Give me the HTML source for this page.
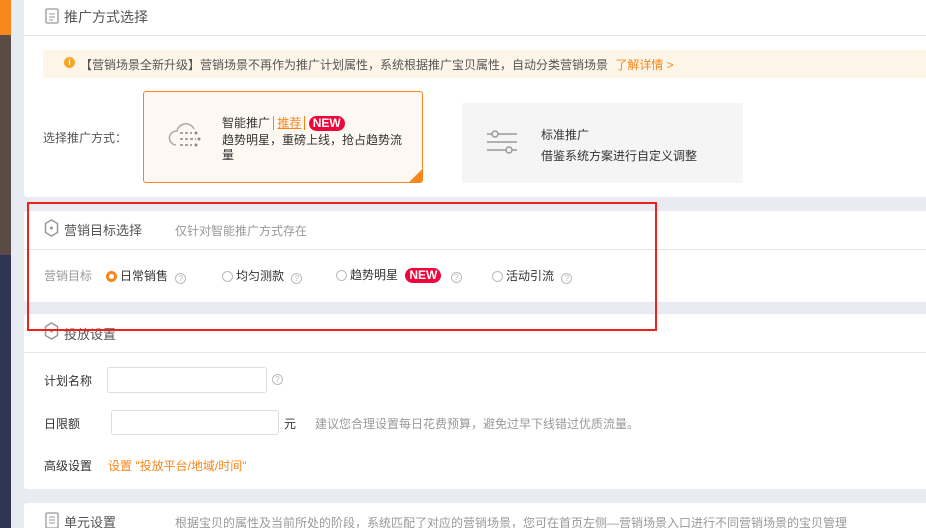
<!DOCTYPE html><html><head><meta charset="utf-8"><style>
*{margin:0;padding:0;box-sizing:border-box}
html,body{width:926px;height:528px;overflow:hidden}
body{background:#e8ebf2;font-family:"Liberation Sans","Noto Sans CJK SC",sans-serif;font-size:12px;color:#333;position:relative}
.a{position:absolute}
.card{position:absolute;left:24px;width:910px;background:#fff;border-radius:3px;overflow:hidden}
.hr{position:absolute;left:0;right:0;height:1px;background:#e6e6e6}
.q{display:inline-block;width:11px;height:11px;border:1px solid #bbb;border-radius:50%;color:#bbb;font-size:8px;line-height:9px;text-align:center;vertical-align:-1px}
.rad{display:inline-block;width:11px;height:11px;border:1px solid #bbb;border-radius:50%;vertical-align:-2px;margin-right:3px}
.new{display:inline-block;background:#f0063b;color:#fff;border-radius:8px;padding:0 4px;font-size:12px;line-height:15px;font-weight:bold}
.inp{position:absolute;border:1px solid #ddd;border-radius:3px;background:#fff}
</style></head><body>
<div class="a" style="left:0;top:0;width:11px;height:35px;background:#f7861d"></div>
<div class="a" style="left:0;top:35px;width:11px;height:220px;background:#5a4b46"></div>
<div class="a" style="left:0;top:255px;width:11px;height:273px;background:#2f3654"></div>

<div class="card" style="top:-4px;height:201px">
 <svg class="a" style="left:21px;top:12px" width="14" height="16"><rect x="1" y="1" width="12" height="14" rx="1" fill="none" stroke="#999" stroke-width="1.3"/><path d="M4 6h6M4 9h6M4 12h4" stroke="#999"/></svg>
 <div class="a" style="left:40px;top:11px;font-size:14px;color:#555">推广方式选择</div>
 <div class="hr" style="top:39px"></div>
 <div class="a" style="left:19px;top:54px;width:900px;height:28px;background:#fdf6e8"></div>
 <div class="a" style="left:40px;top:61px;width:11px;height:11px;border-radius:50%;background:#f5a623;color:#fff;font-size:9px;line-height:11px;text-align:center;font-weight:bold">i</div>
 <div class="a" style="left:56px;top:60px;color:#555">【营销场景全新升级】营销场景不再作为推广计划属性，系统根据推广宝贝属性，自动分类营销场景 <span style="color:#f7861d;margin-left:4px">了解详情 &gt;</span></div>
 <div class="a" style="left:19px;top:133px;color:#555">选择推广方式：</div>
 <div class="a" style="left:119px;top:95px;width:280px;height:92px;border:1px solid #f7861d;border-radius:3px;background:#fdf8f2;overflow:hidden">
  <svg class="a" style="left:22px;top:27px" width="40" height="32"><path d="M10 26a7 7 0 0 1 1-14a9 9 0 0 1 17-2" fill="none" stroke="#aaa" stroke-width="1.5"/><path d="M14 14h12M14 20h16M14 26h12" stroke="#888" stroke-width="1.5" stroke-dasharray="3 2"/><circle cx="30" cy="14" r="1.5" fill="#888"/><circle cx="33" cy="20" r="1.5" fill="#888"/><circle cx="30" cy="26" r="1.5" fill="#888"/></svg>
  <div class="a" style="left:78px;top:22px;font-size:12px;color:#333">智能推广 <span style="border-left:1px solid #f7861d;border-right:1px solid #f7861d;color:#f7861d;padding:0 3px;text-decoration:underline">推荐</span> <span class="new">NEW</span></div>
  <div class="a" style="left:78px;top:41px;width:185px;line-height:15px;color:#333">趋势明星，重磅上线，抢占趋势流量</div>
  <div class="a" style="right:-9px;bottom:-9px;width:18px;height:18px;background:#f7861d;transform:rotate(45deg)"></div>
 </div>
 <div class="a" style="left:438px;top:107px;width:281px;height:80px;background:#f5f5f5;border-radius:2px">
  <svg class="a" style="left:23px;top:26px" width="34" height="26"><path d="M2 5h30M2 13h30M2 21h30" stroke="#999" stroke-width="1.5"/><circle cx="10" cy="5" r="3" fill="#f5f5f5" stroke="#999" stroke-width="1.5"/><circle cx="24" cy="21" r="3" fill="#f5f5f5" stroke="#999" stroke-width="1.5"/></svg>
  <div class="a" style="left:79px;top:23px">标准推广</div>
  <div class="a" style="left:79px;top:44px">借鉴系统方案进行自定义调整</div>
 </div>
</div>

<div class="card" style="top:211px;height:91px">
 <svg class="a" style="left:20px;top:8px" width="15" height="18"><path d="M7.5 1l6 3.5v9l-6 3.5l-6-3.5v-9z" fill="none" stroke="#999" stroke-width="1.5"/><circle cx="7.5" cy="9" r="1.5" fill="#999"/></svg>
 <div class="a" style="left:40px;top:9px;font-size:13px;color:#555">营销目标选择</div>
 <div class="a" style="left:151px;top:11px;color:#999">仅针对智能推广方式存在</div>
 <div class="hr" style="top:38px"></div>
 <div class="a" style="left:20px;top:56px;color:#999">营销目标</div>
 <div class="a" style="left:82px;top:56px"><span class="rad" style="border:3px solid #f7861d;background:#fff"></span>日常销售 <span class="q" style="margin-left:4px">?</span></div>
 <div class="a" style="left:198px;top:56px"><span class="rad"></span>均匀测款 <span class="q" style="margin-left:4px">?</span></div>
 <div class="a" style="left:312px;top:55px"><span class="rad"></span>趋势明星 <span class="new" style="margin-left:4px">NEW</span> <span class="q" style="margin-left:6px">?</span></div>
 <div class="a" style="left:468px;top:56px"><span class="rad"></span>活动引流 <span class="q" style="margin-left:4px">?</span></div>
</div>

<div class="card" style="top:314px;height:175px">
 <svg class="a" style="left:20px;top:8px" width="15" height="18"><path d="M7.5 1l6 3.5v9l-6 3.5l-6-3.5v-9z" fill="none" stroke="#999" stroke-width="1.5"/><circle cx="7.5" cy="9" r="1.5" fill="#999"/></svg>
 <div class="a" style="left:40px;top:10px;font-size:13px;color:#555">投放设置</div>
 <div class="hr" style="top:38px"></div>
 <div class="a" style="left:20px;top:58px">计划名称</div>
 <div class="inp" style="left:83px;top:53px;width:160px;height:26px"></div>
 <span class="a q" style="left:248px;top:60px">?</span>
 <div class="a" style="left:20px;top:101px">日限额</div>
 <div class="inp" style="left:87px;top:96px;width:168px;height:25px"></div>
 <div class="a" style="left:260px;top:101px">元</div>
 <div class="a" style="left:291px;top:101px;color:#999">建议您合理设置每日花费预算，避免过早下线错过优质流量。</div>
 <div class="a" style="left:20px;top:143px">高级设置</div>
 <div class="a" style="left:84px;top:143px;color:#f7861d">设置 "投放平台/地域/时间"</div>
</div>

<div class="card" style="top:503px;height:40px">
 <svg class="a" style="left:21px;top:9px" width="14" height="17"><rect x="1" y="1" width="12" height="15" rx="1" fill="none" stroke="#999" stroke-width="1.3"/><path d="M4 5h6M4 8h6M4 11h6" stroke="#999"/></svg>
 <div class="a" style="left:40px;top:9px;font-size:13px;color:#555">单元设置</div>
 <div class="a" style="left:151px;top:11px;color:#999">根据宝贝的属性及当前所处的阶段，系统匹配了对应的营销场景，您可在首页左侧—营销场景入口进行不同营销场景的宝贝管理</div>
</div>

<div class="a" style="left:27px;top:202px;width:630px;height:129px;border:2px solid #f0201d"></div>
</body></html>
